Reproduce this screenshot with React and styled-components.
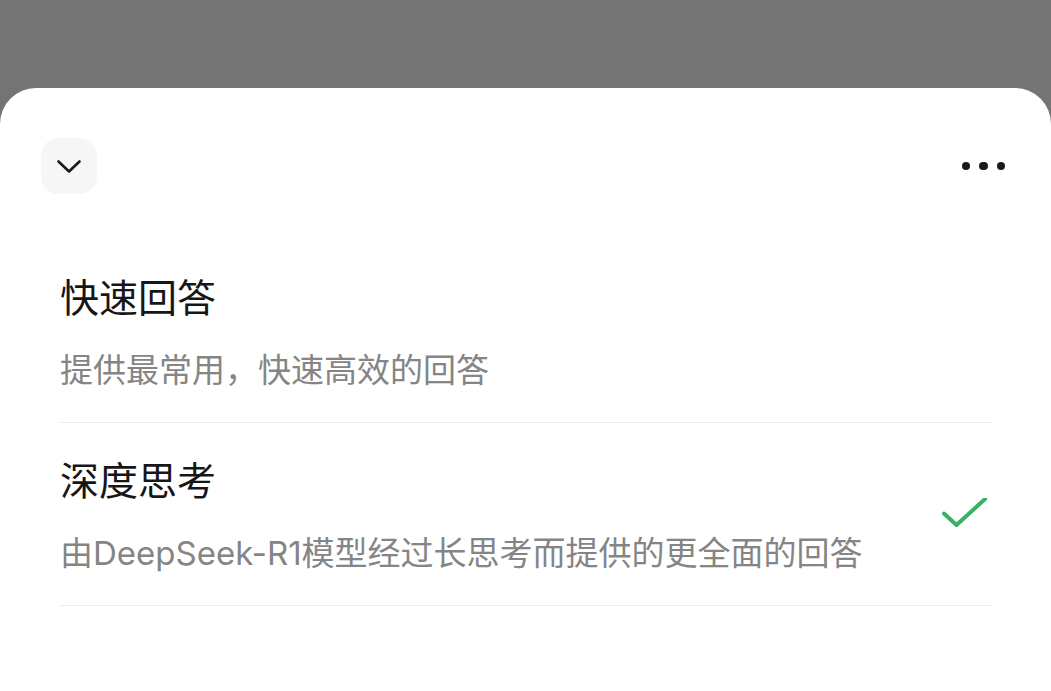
import React, { useState } from 'react'
import styled, { createGlobalStyle } from 'styled-components'

const GlobalStyle = createGlobalStyle`
html, body {
margin: 0;
padding: 0;
background: #747474;
font-family: Inter, 'Noto Sans CJK SC', sans-serif;
}
`

const modes = [
    { id: 'fast', title: '快速回答', desc: '提供最常用，快速高效的回答' },
    { id: 'deep', title: '深度思考', desc: '由DeepSeek-R1模型经过长思考而提供的更全面的回答' },
]

const App = () => {
    const [selected, setSelected] = useState('deep')

    return (
<>
<GlobalStyle />
<Sheet>
    <Header>
        <CloseButton aria-label="collapse">
            <svg width="28" height="28" viewBox="0 0 28 28" fill="none">
                <path d="M3.5 9.5 L14 19.5 L24.5 9.5" stroke="#1a1a1a" strokeWidth="2.6" strokeLinecap="round" strokeLinejoin="round" />
            </svg>
        </CloseButton>
        <MoreButton aria-label="more">
            <Dot /><Dot /><Dot />
        </MoreButton>
    </Header>
    <List>
        {modes.map((mode) => (
        <Row key={mode.id} onClick={() => setSelected(mode.id)}>
            <Texts>
                <Title>{mode.title}</Title>
                <Desc>{mode.desc}</Desc>
            </Texts>
            {selected === mode.id && (
            <Check width="48" height="36" viewBox="0 0 48 36" fill="none">
                <path d="M3 15.5 L15.5 27 L44 1" stroke="#37b262" strokeWidth="4" strokeLinecap="round" strokeLinejoin="round" />
            </Check>
            )}
        </Row>
        ))}
    </List>
</Sheet>
</>
    )
}

const Sheet = styled.div`
margin-top: 88px;
background: #ffffff;
border-radius: 36px 36px 0 0;
min-height: 603px;
`
const Header = styled.div`
display: flex;
justify-content: space-between;
align-items: center;
padding: 50px 46px 0 41px;
`
const CloseButton = styled.button`
width: 56px;
height: 56px;
border: none;
border-radius: 18px;
background: #f6f6f6;
display: flex;
align-items: center;
justify-content: center;
padding: 0;
`
const MoreButton = styled.button`
display: flex;
gap: 9px;
border: none;
background: none;
padding: 0;
`
const Dot = styled.span`
width: 8.5px;
height: 8.5px;
border-radius: 50%;
background: #1a1a1a;
`
const List = styled.div`
padding: 46px 58px 0 60px;
`
const Row = styled.div`
display: flex;
align-items: center;
justify-content: space-between;
padding: 34px 0 30px;
border-bottom: 1.5px solid #ededed;
cursor: pointer;
`
const Texts = styled.div`
display: flex;
flex-direction: column;
gap: 26px;
`
const Title = styled.div`
font-size: 39px;
line-height: 48px;
color: #161616;
`
const Desc = styled.div`
font-size: 33px;
line-height: 44px;
color: #858585;
`
const Check = styled.svg`
margin-right: 4px;
`

export default App
